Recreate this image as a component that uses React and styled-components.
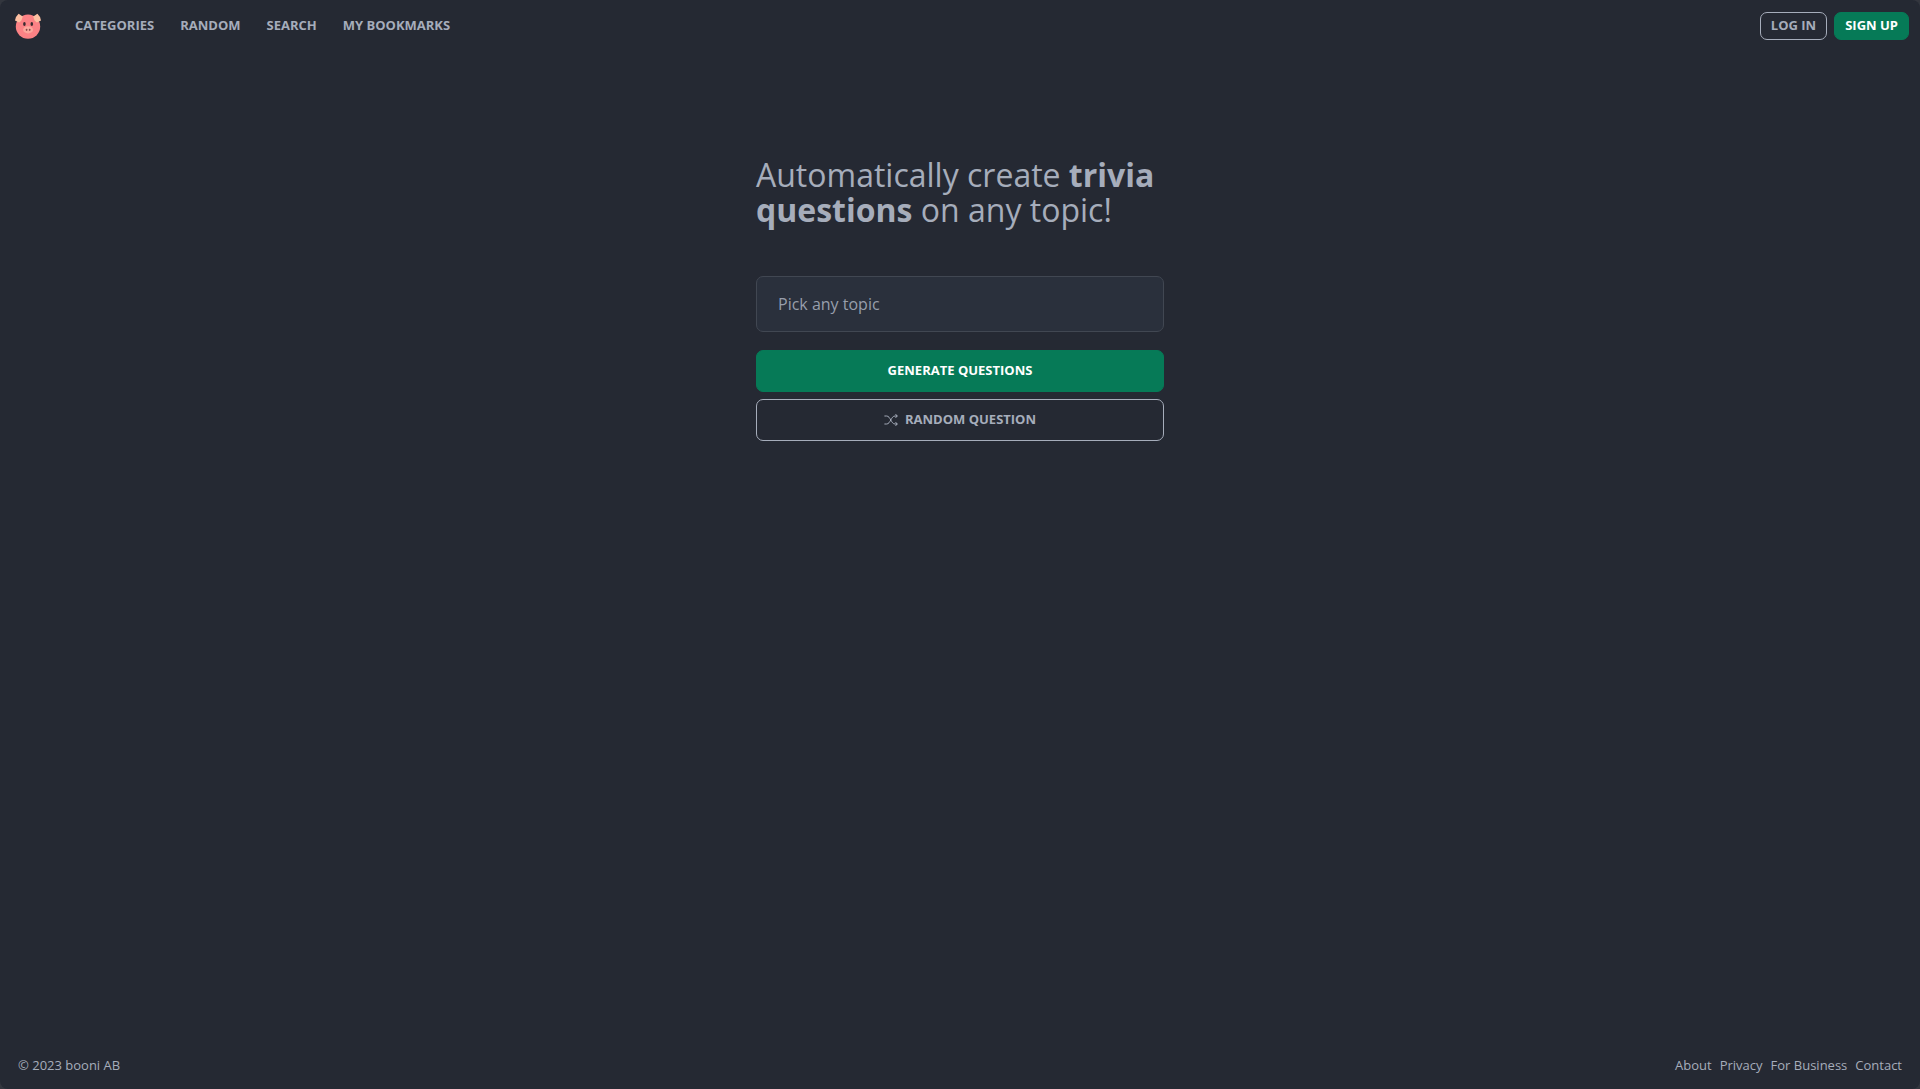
import styled, { createGlobalStyle, ThemeProvider } from "styled-components";

const theme = {
  colors: {
    background: "#252933",
    field: "#2a303c",
    fieldBorder: "#414752",
    text: "#a6adbb",
    green: "#067a57",
    white: "#ffffff",
    edge: "#33363e",
  },
};

const navLinks = ["Categories", "Random", "Search", "My bookmarks"];
const footerLinks = ["About", "Privacy", "For Business", "Contact"];

const PigLogo = () => (
  <svg width="26" height="26" viewBox="0 0 26 26" aria-hidden="true">
    <circle cx="13" cy="13.6" r="12.2" fill="#fc8285" />
    <path d="M3.6.8 7.8 3.6 6.4 7.4 4.2 9.6 0 7.4Q.6 3.4 3.6.8Z" fill="#fdbfa2" />
    <path d="M22.4.8 18.2 3.6l1.4 3.8 2.2 2.2L26 7.4Q25.4 3.4 22.4.8Z" fill="#fdbfa2" />
    <ellipse cx="9.4" cy="11" rx="1.3" ry="2" fill="#3a2b30" />
    <ellipse cx="16.8" cy="11" rx="1.3" ry="2" fill="#3a2b30" />
    <ellipse cx="13.1" cy="16.8" rx="5" ry="3.6" fill="#fda79c" />
    <ellipse cx="11.6" cy="16.8" rx=".9" ry="1.1" fill="#8c4a4c" />
    <ellipse cx="14.7" cy="16.8" rx=".9" ry="1.1" fill="#8c4a4c" />
  </svg>
);

const ShuffleIcon = () => (
  <svg
    width="14"
    height="14"
    viewBox="0 0 14 14"
    fill="none"
    stroke="currentColor"
    strokeLinecap="round"
    strokeLinejoin="round"
    aria-hidden="true"
  >
    <path d="M.8 4H2.6C6.5 4 7 12 11 12h2M.8 12h1.8C6.5 12 7 4 11 4h2" />
    <path d="M11.8 2.4 13.2 4l-1.4 1.6M11.8 10.4l1.4 1.6-1.4 1.6" />
  </svg>
);

const App = () => (
  <ThemeProvider theme={theme}>
    <GlobalStyle />
    <Page>
      <Header>
        <Logo href="#home" aria-label="Home">
          <PigLogo />
        </Logo>
        <Nav>
          {navLinks.map((label) => (
            <NavLink key={label} href={`#${label}`}>
              {label}
            </NavLink>
          ))}
        </Nav>
        <AuthButtons>
          <Button $small>Log in</Button>
          <Button $small $primary>
            Sign up
          </Button>
        </AuthButtons>
      </Header>
      <Main>
        <Title>
          Automatically create <strong>trivia questions</strong> on any topic!
        </Title>
        <Form onSubmit={(e) => e.preventDefault()}>
          <TopicInput type="text" placeholder="Pick any topic" aria-label="Pick any topic" />
          <Button $primary type="submit">
            Generate questions
          </Button>
          <Button type="button">
            <ShuffleIcon />
            Random question
          </Button>
        </Form>
      </Main>
      <Footer>
        <p>© 2023 booni AB</p>
        <FooterNav>
          {footerLinks.map((label) => (
            <a key={label} href={`#${label}`}>
              {label}
            </a>
          ))}
        </FooterNav>
      </Footer>
    </Page>
  </ThemeProvider>
);

export default App;

const GlobalStyle = createGlobalStyle`
  * {
    box-sizing: border-box;
    margin: 0;
    padding: 0;
  }

  body {
    background-color: ${({ theme }) => theme.colors.edge};
    color: ${({ theme }) => theme.colors.text};
    font-family: "Open Sans", "Noto Sans", sans-serif;
  }

  a {
    color: inherit;
    text-decoration: none;
  }
`;

const Page = styled.div`
  background-color: ${({ theme }) => theme.colors.background};
  border-radius: 8px;
  display: flex;
  flex-direction: column;
  min-height: 100vh;
`;

const Header = styled.header`
  align-items: center;
  display: flex;
  height: 52px;
  padding: 0 11px 0 15px;
`;

const Logo = styled.a`
  display: flex;
`;

const Nav = styled.nav`
  display: flex;
  gap: 26px;
  margin-left: 34px;
  padding-bottom: 2px;
`;

const NavLink = styled.a`
  font-size: 13px;
  font-weight: 700;
  line-height: 20px;
  text-transform: uppercase;
`;

const AuthButtons = styled.div`
  display: flex;
  gap: 7px;
  margin-left: auto;
`;

const Button = styled.button`
  align-items: center;
  background-color: ${({ theme, $primary }) => ($primary ? theme.colors.green : "transparent")};
  border: 1px solid ${({ theme, $primary }) => ($primary ? theme.colors.green : theme.colors.text)};
  border-radius: 7px;
  color: ${({ theme, $primary }) => ($primary ? theme.colors.white : theme.colors.text)};
  cursor: pointer;
  display: flex;
  font-family: inherit;
  font-size: 13px;
  font-weight: 700;
  gap: 7px;
  height: ${({ $small }) => ($small ? "28px" : "42px")};
  justify-content: center;
  padding: 0 10px 2px;
  text-transform: uppercase;
`;

const Main = styled.main`
  align-self: center;
  flex: 1;
  max-width: 408px;
  padding-top: 105px;
  width: 100%;
`;

const Title = styled.h1`
  font-size: 32px;
  font-weight: 400;
  line-height: 35px;

  strong {
    font-weight: 700;
  }
`;

const Form = styled.form`
  display: flex;
  flex-direction: column;
  gap: 7px;
  margin-top: 49px;
`;

const TopicInput = styled.input`
  background-color: ${({ theme }) => theme.colors.field};
  border: 1px solid ${({ theme }) => theme.colors.fieldBorder};
  border-radius: 7px;
  color: ${({ theme }) => theme.colors.text};
  font-family: inherit;
  font-size: 16px;
  height: 56px;
  margin-bottom: 11px;
  padding: 0 21px;

  &::placeholder {
    color: #979eab;
    opacity: 1;
  }
`;

const Footer = styled.footer`
  display: flex;
  font-size: 13px;
  justify-content: space-between;
  line-height: 20px;
  padding: 14px 18px;
`;

const FooterNav = styled.nav`
  display: flex;
  gap: 8px;
`;
